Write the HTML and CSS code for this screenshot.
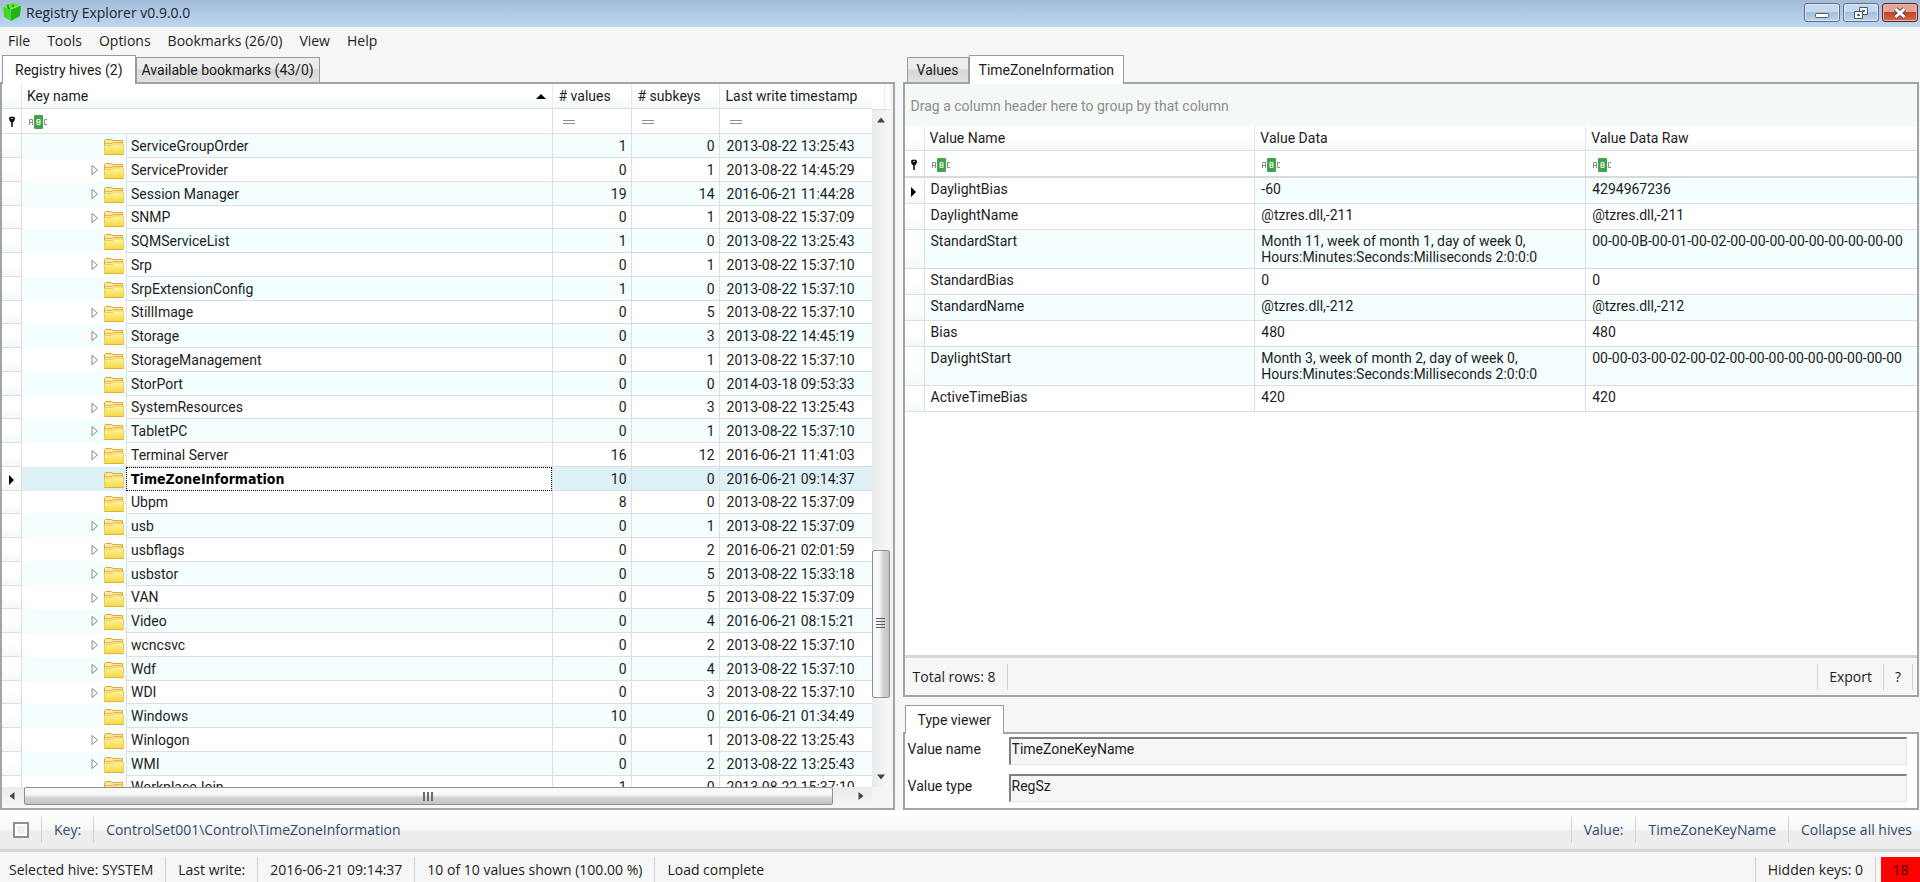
FILE: index.html
```html
<!DOCTYPE html>
<html lang="en">
<head>
<meta charset="utf-8">
<title>Registry Explorer v0.9.0.0</title>
<link rel="stylesheet" href="styles.css">
</head>
<body>
<svg class="defs" width="0" height="0" aria-hidden="true">
  <defs>
    <linearGradient id="fold" x1="0" y1="0" x2="0" y2="1">
      <stop offset="0" stop-color="#fdf3a4"/><stop offset="1" stop-color="#f5d840"/>
    </linearGradient>
  </defs>
  <symbol id="folder" viewBox="0 0 20 18">
    <path d="M.5 16V2.500l1-1h6l1.500 1H18.500V15z" fill="#fbe9a2" stroke="#e0a83c"/>
    <path d="M1 5.500h7L9.500 4.500H18" stroke="#e6b64a" fill="none"/>
    <path d="M.5 16.500V7.500h8L10 6h9.500v10.500z" fill="url(#fold)" stroke="#f0cf57"/>
    <path d="M.5 16.500h19" stroke="#e2b03c" fill="none"/>
  </symbol>
  <symbol id="exp" viewBox="0 0 8 12"><path d="M1 1.500v9L6.500 6z" fill="#fff" stroke="#8a8a8a"/></symbol>
  <symbol id="cur" viewBox="0 0 6 10"><path d="M0 0v10l5-5z" fill="#000"/></symbol>
  <symbol id="pin" viewBox="0 0 8 12"><path d="M1 2.500Q1 .5 4 .5t3 2Q7 5 4.800 6.500V11H3.200V6.500Q1 5 1 2.500z" fill="#111"/><path d="M3 2.500h2" stroke="#bbb"/></symbol>
  <symbol id="abc" viewBox="0 0 20 14">
    <rect x="6" width="9" height="14" rx="1" fill="#3fa447"/>
    <path d="M1.500 10V4.500h3V10M1.500 7.500h3M19 4.500h-2.500v5H19" fill="none" stroke="#8b8b8b"/>
    <path d="M9 4.500h3v5H9zM9 7h3" fill="none" stroke="#fff"/>
  </symbol>
  <symbol id="eq" viewBox="0 0 12 6"><path d="M0 1.500h12M0 4.500h12" stroke="#909090"/></symbol>
</svg>

<header class="title">
  <svg class="logo" viewBox="0 0 20 20"><path d="M1 4 L9 7 V19 L2 15 Z" fill="#46d628"/><path d="M9 7 L19 3 L18 14 L9 19 Z" fill="#1fb512"/><path d="M1 4 L10 1 L19 3 L9 7 Z" fill="#5be335"/><path d="M1 4 L9 7 L19 3" stroke="#9df277" fill="none"/><path d="M6 2.500 V6 L8 6.500 M11 2.500 V5" stroke="#0d6d0a" fill="none"/></svg>
  <h1>Registry Explorer v0.9.0.0</h1>
  <div class="winbtns">
    <button aria-label="Minimize"><svg width="16" height="14" viewBox="0 0 16 14"><rect x="1.500" y="7.500" width="13" height="4" rx="1" fill="#fff" stroke="#555e69"/></svg></button>
    <button aria-label="Restore"><svg width="16" height="14" viewBox="0 0 16 14"><path d="M6.500 1.500h8v7h-8z" fill="#f5f7fa" stroke="#4f5964"/><path d="M9.500 4.500h2v1h-2z" fill="none" stroke="#4f5964"/><path d="M1.500 5.500h8v7h-8z" fill="#f5f7fa" stroke="#4f5964"/><path d="M4.500 8.500h2v1h-2z" fill="none" stroke="#4f5964"/></svg></button>
    <button class="close" aria-label="Close"><svg width="16" height="14" viewBox="0 0 16 14"><path d="M3.500 3l9 8M12.500 3l-9 8" stroke="#5d4a50" stroke-width="5"/><path d="M3.500 3l9 8M12.500 3l-9 8" stroke="#fff" stroke-width="3"/></svg></button>
  </div>
</header>

<nav class="menu">
  <button>File</button><button>Tools</button><button>Options</button><button>Bookmarks (26/0)</button><button>View</button><button>Help</button>
</nav>

<main class="main">
  <section class="col">
    <div class="tabs left">
      <button class="tab on">Registry hives (2)</button><button class="tab">Available bookmarks (43/0)</button>
    </div>
    <div class="panel hives">
      <div class="treebox">
        <table class="grid tree">
          <colgroup><col class="c-ind"><col><col class="c-val"><col class="c-sub"><col class="c-time"></colgroup>
          <thead>
            <tr><th></th><th><div class="sorted">Key name<svg width="10" height="5" viewBox="0 0 10 5"><path d="M0 5l5-5 5 5z"/></svg></div></th><th># values</th><th># subkeys</th><th>Last write timestamp</th></tr>
            <tr class="filter"><td><svg width="8" height="12"><use href="#pin"/></svg></td><td><svg width="20" height="14"><use href="#abc"/></svg></td><td><svg class="eq" width="12" height="6"><use href="#eq"/></svg></td><td><svg class="eq" width="12" height="6"><use href="#eq"/></svg></td><td><svg class="eq" width="12" height="6"><use href="#eq"/></svg></td></tr>
          </thead>
          <tbody>
            <tr><td></td><td><div class="key leaf"><svg class="x"><use href="#exp"/></svg><svg class="f"><use href="#folder"/></svg><span>ServiceGroupOrder</span></div></td><td>1</td><td>0</td><td>2013-08-22 13:25:43</td></tr>
            <tr><td></td><td><div class="key"><svg class="x"><use href="#exp"/></svg><svg class="f"><use href="#folder"/></svg><span>ServiceProvider</span></div></td><td>0</td><td>1</td><td>2013-08-22 14:45:29</td></tr>
            <tr><td></td><td><div class="key"><svg class="x"><use href="#exp"/></svg><svg class="f"><use href="#folder"/></svg><span>Session Manager</span></div></td><td>19</td><td>14</td><td>2016-06-21 11:44:28</td></tr>
            <tr><td></td><td><div class="key"><svg class="x"><use href="#exp"/></svg><svg class="f"><use href="#folder"/></svg><span>SNMP</span></div></td><td>0</td><td>1</td><td>2013-08-22 15:37:09</td></tr>
            <tr><td></td><td><div class="key leaf"><svg class="x"><use href="#exp"/></svg><svg class="f"><use href="#folder"/></svg><span>SQMServiceList</span></div></td><td>1</td><td>0</td><td>2013-08-22 13:25:43</td></tr>
            <tr><td></td><td><div class="key"><svg class="x"><use href="#exp"/></svg><svg class="f"><use href="#folder"/></svg><span>Srp</span></div></td><td>0</td><td>1</td><td>2013-08-22 15:37:10</td></tr>
            <tr><td></td><td><div class="key leaf"><svg class="x"><use href="#exp"/></svg><svg class="f"><use href="#folder"/></svg><span>SrpExtensionConfig</span></div></td><td>1</td><td>0</td><td>2013-08-22 15:37:10</td></tr>
            <tr><td></td><td><div class="key"><svg class="x"><use href="#exp"/></svg><svg class="f"><use href="#folder"/></svg><span>StillImage</span></div></td><td>0</td><td>5</td><td>2013-08-22 15:37:10</td></tr>
            <tr><td></td><td><div class="key"><svg class="x"><use href="#exp"/></svg><svg class="f"><use href="#folder"/></svg><span>Storage</span></div></td><td>0</td><td>3</td><td>2013-08-22 14:45:19</td></tr>
            <tr><td></td><td><div class="key"><svg class="x"><use href="#exp"/></svg><svg class="f"><use href="#folder"/></svg><span>StorageManagement</span></div></td><td>0</td><td>1</td><td>2013-08-22 15:37:10</td></tr>
            <tr><td></td><td><div class="key leaf"><svg class="x"><use href="#exp"/></svg><svg class="f"><use href="#folder"/></svg><span>StorPort</span></div></td><td>0</td><td>0</td><td>2014-03-18 09:53:33</td></tr>
            <tr><td></td><td><div class="key"><svg class="x"><use href="#exp"/></svg><svg class="f"><use href="#folder"/></svg><span>SystemResources</span></div></td><td>0</td><td>3</td><td>2013-08-22 13:25:43</td></tr>
            <tr><td></td><td><div class="key"><svg class="x"><use href="#exp"/></svg><svg class="f"><use href="#folder"/></svg><span>TabletPC</span></div></td><td>0</td><td>1</td><td>2013-08-22 15:37:10</td></tr>
            <tr><td></td><td><div class="key"><svg class="x"><use href="#exp"/></svg><svg class="f"><use href="#folder"/></svg><span>Terminal Server</span></div></td><td>16</td><td>12</td><td>2016-06-21 11:41:03</td></tr>
            <tr class="sel"><td><svg width="6" height="10"><use href="#cur"/></svg></td><td><div class="key leaf"><svg class="x"><use href="#exp"/></svg><svg class="f"><use href="#folder"/></svg><span>TimeZoneInformation</span></div></td><td>10</td><td>0</td><td>2016-06-21 09:14:37</td></tr>
            <tr><td></td><td><div class="key leaf"><svg class="x"><use href="#exp"/></svg><svg class="f"><use href="#folder"/></svg><span>Ubpm</span></div></td><td>8</td><td>0</td><td>2013-08-22 15:37:09</td></tr>
            <tr><td></td><td><div class="key"><svg class="x"><use href="#exp"/></svg><svg class="f"><use href="#folder"/></svg><span>usb</span></div></td><td>0</td><td>1</td><td>2013-08-22 15:37:09</td></tr>
            <tr><td></td><td><div class="key"><svg class="x"><use href="#exp"/></svg><svg class="f"><use href="#folder"/></svg><span>usbflags</span></div></td><td>0</td><td>2</td><td>2016-06-21 02:01:59</td></tr>
            <tr><td></td><td><div class="key"><svg class="x"><use href="#exp"/></svg><svg class="f"><use href="#folder"/></svg><span>usbstor</span></div></td><td>0</td><td>5</td><td>2013-08-22 15:33:18</td></tr>
            <tr><td></td><td><div class="key"><svg class="x"><use href="#exp"/></svg><svg class="f"><use href="#folder"/></svg><span>VAN</span></div></td><td>0</td><td>5</td><td>2013-08-22 15:37:09</td></tr>
            <tr><td></td><td><div class="key"><svg class="x"><use href="#exp"/></svg><svg class="f"><use href="#folder"/></svg><span>Video</span></div></td><td>0</td><td>4</td><td>2016-06-21 08:15:21</td></tr>
            <tr><td></td><td><div class="key"><svg class="x"><use href="#exp"/></svg><svg class="f"><use href="#folder"/></svg><span>wcncsvc</span></div></td><td>0</td><td>2</td><td>2013-08-22 15:37:10</td></tr>
            <tr><td></td><td><div class="key"><svg class="x"><use href="#exp"/></svg><svg class="f"><use href="#folder"/></svg><span>Wdf</span></div></td><td>0</td><td>4</td><td>2013-08-22 15:37:10</td></tr>
            <tr><td></td><td><div class="key"><svg class="x"><use href="#exp"/></svg><svg class="f"><use href="#folder"/></svg><span>WDI</span></div></td><td>0</td><td>3</td><td>2013-08-22 15:37:10</td></tr>
            <tr><td></td><td><div class="key leaf"><svg class="x"><use href="#exp"/></svg><svg class="f"><use href="#folder"/></svg><span>Windows</span></div></td><td>10</td><td>0</td><td>2016-06-21 01:34:49</td></tr>
            <tr><td></td><td><div class="key"><svg class="x"><use href="#exp"/></svg><svg class="f"><use href="#folder"/></svg><span>Winlogon</span></div></td><td>0</td><td>1</td><td>2013-08-22 13:25:43</td></tr>
            <tr><td></td><td><div class="key"><svg class="x"><use href="#exp"/></svg><svg class="f"><use href="#folder"/></svg><span>WMI</span></div></td><td>0</td><td>2</td><td>2013-08-22 13:25:43</td></tr>
            <tr><td></td><td><div class="key leaf"><svg class="x"><use href="#exp"/></svg><svg class="f"><use href="#folder"/></svg><span>WorkplaceJoin</span></div></td><td>1</td><td>0</td><td>2013-08-22 15:37:10</td></tr>
          </tbody>
        </table>
      </div>
      <div class="side">
        <div class="stub"></div>
        <div class="vbar">
          <svg width="10" height="6" viewBox="0 0 10 6"><path d="M1 5.500l4-5 4 5z" fill="#444"/></svg>
          <div class="space"></div>
          <div class="vthumb"><svg width="9" height="11" viewBox="0 0 9 11"><path d="M0 .5h9M0 3.500h9M0 6.500h9M0 9.500h9" stroke="#5a5a5a"/></svg></div>
          <div class="rest"></div>
          <svg width="10" height="6" viewBox="0 0 10 6"><path d="M1 .5l4 5 4-5z" fill="#444"/></svg>
        </div>
      </div>
      <div class="hbar">
        <svg width="6" height="10" viewBox="0 0 6 10"><path d="M5.500 1l-5 4 5 4z" fill="#444"/></svg>
        <div class="hthumb"><svg width="12" height="9" viewBox="0 0 12 9"><path d="M2 0v9M6 0v9M10 0v9" stroke="#6a6a6a" stroke-width="2"/></svg></div>
        <svg width="6" height="10" viewBox="0 0 6 10"><path d="M.5 1l5 4-5 4z" fill="#444"/></svg>
      </div>
    </div>
  </section>

  <section class="col">
    <div class="tabs right">
      <button class="tab">Values</button><button class="tab on">TimeZoneInformation</button>
    </div>
    <div class="panel values">
      <div class="group">Drag a column header here to group by that column</div>
      <div class="valuebox">
        <table class="grid vals">
          <colgroup><col class="c-ind"><col><col><col></colgroup>
          <thead>
            <tr><th></th><th>Value Name</th><th>Value Data</th><th>Value Data Raw</th></tr>
            <tr class="filter"><td><svg width="8" height="12"><use href="#pin"/></svg></td><td><svg width="20" height="14"><use href="#abc"/></svg></td><td><svg width="20" height="14"><use href="#abc"/></svg></td><td><svg width="20" height="14"><use href="#abc"/></svg></td></tr>
          </thead>
          <tbody>
            <tr class="focus"><td><svg width="6" height="10"><use href="#cur"/></svg></td><td>DaylightBias</td><td>-60</td><td>4294967236</td></tr>
            <tr><td></td><td>DaylightName</td><td>@tzres.dll,-211</td><td>@tzres.dll,-211</td></tr>
            <tr class="tall"><td></td><td>StandardStart</td><td>Month 11, week of month 1, day of week 0,<br>Hours:Minutes:Seconds:Milliseconds 2:0:0:0</td><td>00-00-0B-00-01-00-02-00-00-00-00-00-00-00-00-00</td></tr>
            <tr><td></td><td>StandardBias</td><td>0</td><td>0</td></tr>
            <tr><td></td><td>StandardName</td><td>@tzres.dll,-212</td><td>@tzres.dll,-212</td></tr>
            <tr><td></td><td>Bias</td><td>480</td><td>480</td></tr>
            <tr class="tall"><td></td><td>DaylightStart</td><td>Month 3, week of month 2, day of week 0,<br>Hours:Minutes:Seconds:Milliseconds 2:0:0:0</td><td>00-00-03-00-02-00-02-00-00-00-00-00-00-00-00-00</td></tr>
            <tr><td></td><td>ActiveTimeBias</td><td>420</td><td>420</td></tr>
          </tbody>
        </table>
      </div>
      <div class="foot">
        <span>Total rows: 8</span><i></i><b></b><i></i><button>Export</button><i></i><button>?</button><i></i>
      </div>
    </div>
    <div class="tabs viewer"><button class="tab on">Type viewer</button></div>
    <form class="panel type">
      <label for="vn">Value name</label><input id="vn" value="TimeZoneKeyName" readonly>
      <label for="vt">Value type</label><input id="vt" value="RegSz" readonly>
    </form>
  </section>
</main>

<div class="keybar">
  <input type="checkbox" aria-label="Pin key"><i></i><span>Key:</span><i></i><span>ControlSet001\Control\TimeZoneInformation</span>
  <b></b><i></i><span>Value:</span><i></i><span>TimeZoneKeyName</span><i></i><button>Collapse all hives</button>
</div>
<footer class="status">
  <span>Selected hive: SYSTEM</span><i></i><span>Last write:</span><i></i><span>2016-06-21 09:14:37</span><i></i><span>10 of 10 values shown (100.00 %)</span><i></i><span>Load complete</span>
  <b></b><i></i><span>Hidden keys: 0</span><i></i><span class="alert">18</span>
</footer>
</body>
</html>
```
FILE: styles.css
```css
* { box-sizing: border-box; }
body {
  margin: 0;
  height: 100vh;
  display: flex;
  flex-direction: column;
  overflow: hidden;
  background: #f6f6f6;
  color: #1c1c22;
  font: 14px/16px Roboto, "DejaVu Sans", sans-serif;
}
button { border: 0; margin: 0; padding: 0; background: none; color: inherit; font: inherit; }
svg { flex: none; }
.defs { position: absolute; }

.title {
  flex: none;
  display: flex;
  align-items: flex-start;
  height: 27px;
  padding: 2px 2px 0;
  background: linear-gradient(#a3bdd8, #bdd6f0);
}
.logo { width: 20px; height: 20px; }
.title h1 { flex: 1; margin: 0 0 0 4px; font: 14px/21px "Open Sans", sans-serif; color: #1e2430; }
.winbtns { display: flex; gap: 3px; padding-top: 1px; }
.winbtns button {
  display: flex;
  align-items: center;
  justify-content: center;
  width: 36px;
  height: 19px;
  border: 1px solid #5c728c;
  border-radius: 3px;
  background: linear-gradient(#c5d9ee 50%, #a5bfdb 50%, #bcd3ea);
  box-shadow: inset 0 0 0 1px #d8e6f4;
}
.winbtns .close {
  border-color: #5a2a2a;
  background: linear-gradient(#e6a497 50%, #bf4428 50%, #d56a4d);
  box-shadow: inset 0 0 0 1px #e9b1a5;
}

.menu { flex: none; display: flex; gap: 17px; height: 27px; padding: 0 8px; font: 14px/27px "Open Sans", sans-serif; }

.main { flex: 1; min-height: 0; display: grid; grid-template-columns: 895fr 1017fr; gap: 8px; padding-right: 1px; }
.col { display: flex; flex-direction: column; min-width: 0; min-height: 0; }

.tabs { flex: none; display: flex; align-items: flex-end; height: 28px; padding-left: 2px; }
.tabs.right { padding-left: 4px; }
.tab {
  height: 25px;
  padding: 0 9px;
  border: 1px solid #989c9f;
  border-bottom: 0;
  background: linear-gradient(#ececec 45%, #d6d8d7 50%, #dfe0df);
}
.left .tab:last-child { padding: 0 5px; }
.tab.on { position: relative; height: 29px; margin-bottom: -2px; padding: 0 12px; background: #fff; }
.right .tab.on { padding: 0 9px; }
.panel { border: 2px solid #a2a5a8; background: #fff; }

.hives { flex: 1; min-height: 0; display: grid; grid-template: minmax(0, 1fr) 21px / minmax(0, 1fr) 21px; background: #f3f5f4; }
.treebox, .valuebox { overflow: hidden; background: #fff; }
.grid { width: 100%; table-layout: fixed; border-collapse: separate; border-spacing: 0; }
.c-ind { width: 20px; }
.c-val { width: 79px; }
.c-sub { width: 88px; }
.c-time { width: 152px; }
th, td {
  padding: 0 6px;
  border-right: 1px solid #dcdfde;
  border-bottom: 1px solid #dcdfde;
  white-space: nowrap;
  vertical-align: middle;
  text-align: left;
  font-weight: normal;
}
th { height: 25px; background: linear-gradient(#fff 50%, #f4f8f8); border-right-color: #e6e9e8; }
th:first-child, td:first-child { padding: 0; text-align: center; background: linear-gradient(#fff 50%, #f4f8f8); }
td svg { vertical-align: middle; }
th:last-child, td:last-child { border-right: 0; }
.filter td { height: 25px; background: #fff; }
.filter .eq { margin-left: 4px; }
.sorted { display: flex; justify-content: space-between; align-items: center; }
.tree tbody tr { height: 24px; }
.tree tbody tr:nth-child(4n) { height: 23px; }
.tree th:nth-child(2), .vals th:not(:first-child) { padding-left: 5px; }
tbody tr:nth-child(odd) { background: #f5fefe; }
.tree tbody td:nth-child(2) { padding: 0; border-bottom: 0; height: inherit; }
.tree tbody td:nth-child(3), .tree tbody td:nth-child(4) { text-align: right; padding-right: 4px; }
.tree tbody td:last-child { padding-left: 7px; }
.key { display: flex; align-items: center; height: 100%; padding-left: 69px; }
.key .x { width: 8px; height: 12px; }
.key .f { width: 20px; height: 18px; margin: 2px 2px 0 5px; }
.key.leaf .x { visibility: hidden; }
.key span { flex: 1; align-self: stretch; display: flex; align-items: center; padding-left: 4px; border-left: 1px solid #dcdfde; border-bottom: 1px solid #dcdfde; }
.tree tbody tr.sel { background: #ddf1f7; }
.sel .key span { border: 1px dotted #000; background: #fff; color: #000; font-family: "DejaVu Sans Condensed", "Open Sans", sans-serif; font-weight: bold; }

.side { display: flex; flex-direction: column; padding-right: 3px; }
.stub { height: 26px; border-bottom: 1px solid #dcdfde; background: linear-gradient(90deg, #fff 12px, #e6e9e8 12px, #fff 14px); }
.vbar { flex: 1; display: flex; flex-direction: column; align-items: center; padding: 7px 0; background: linear-gradient(90deg, #e9ebea, #f7f8f8); }
.space { flex: 425; }
.rest { flex: 76; }
.vthumb, .hthumb { display: flex; align-items: center; justify-content: center; border: 1px solid #8f9294; border-radius: 2px; }
.vthumb { flex: 145; width: 100%; background: linear-gradient(90deg, #f8f8f8 40%, #d2d4d5 60%, #c2c5c7); }
.hbar { display: flex; align-items: flex-start; gap: 9px; padding: 0 0 0 7px; background: linear-gradient(#e9ebea, #f7f8f8); }
.hbar > svg { margin-top: 4px; }
.hthumb { flex: 1; height: 18px; margin-right: 16px; background: linear-gradient(#f8f8f8 40%, #d2d4d5 60%, #c2c5c7); }
.hbar svg:last-child { margin-right: 8px; }
.hthumb svg:last-child { margin-right: 0; }

.values { flex: 1; min-height: 0; display: flex; flex-direction: column; }
.group { flex: none; height: 42px; padding: 14px 6px; background: #f5f9f6; color: #8a8d8c; }
.valuebox { flex: 1; min-height: 0; }
.vals tbody td { height: 26px; padding-top: 3px; vertical-align: top; }
.vals tbody .tall td, .vals tbody td.tall { height: 39px; }
.vals tbody td:first-child { padding-top: 5px; }
.vals .filter td { height: 27px; border-bottom: 2px solid #d6dad8; }
.focus td:nth-child(2) { background: #fff; }
.foot { flex: none; display: flex; align-items: center; height: 40px; padding: 0 4px 0 8px; border-top: 3px solid #d4d8d5; background: #f6f6f6; font: 14px/20px "Open Sans", sans-serif; }
.foot i, .keybar i, .status i { flex: none; width: 1px; height: 26px; margin: 0 12px; background: #cfd2d1; }
.foot b, .keybar b, .status b { flex: 1; }
.foot i { margin: 0 11px; }
.foot i:last-child { margin-right: 0; }

.viewer { height: 35px; }
.type { flex: none; display: grid; grid-template-columns: 97px 1fr; gap: 9px 4px; padding: 3px 10px 6px 3px; }
.type label { padding-top: 4px; }
.type input { height: 28px; min-width: 0; padding: 0 1px 5px; border: 1px solid #e4e4e4; border-top: 2px solid #808080; border-left: 2px solid #808080; background: #f6f6f6; color: inherit; font: inherit; }

.keybar, .status { flex: none; display: flex; align-items: center; font: 14px/20px "Open Sans", sans-serif; }
.keybar { height: 42px; padding: 1px 8px 0 13px; color: #34496b; background: linear-gradient(#fff 10%, #f5f8f6 50%, #ededed 55%); border-bottom: 3px solid #d4d8d5; }
.keybar input { appearance: none; width: 16px; height: 16px; margin: 0; border: 2px solid #8d9092; background: #eef0f0; box-shadow: inset 0 0 0 2px #fff; }
.status { height: 30px; padding: 5px 0 0 9px; }
.status .alert { align-self: stretch; display: flex; align-items: center; justify-content: center; margin-left: -7px; width: 39px; background: #f00; color: #4a0000; }
```
